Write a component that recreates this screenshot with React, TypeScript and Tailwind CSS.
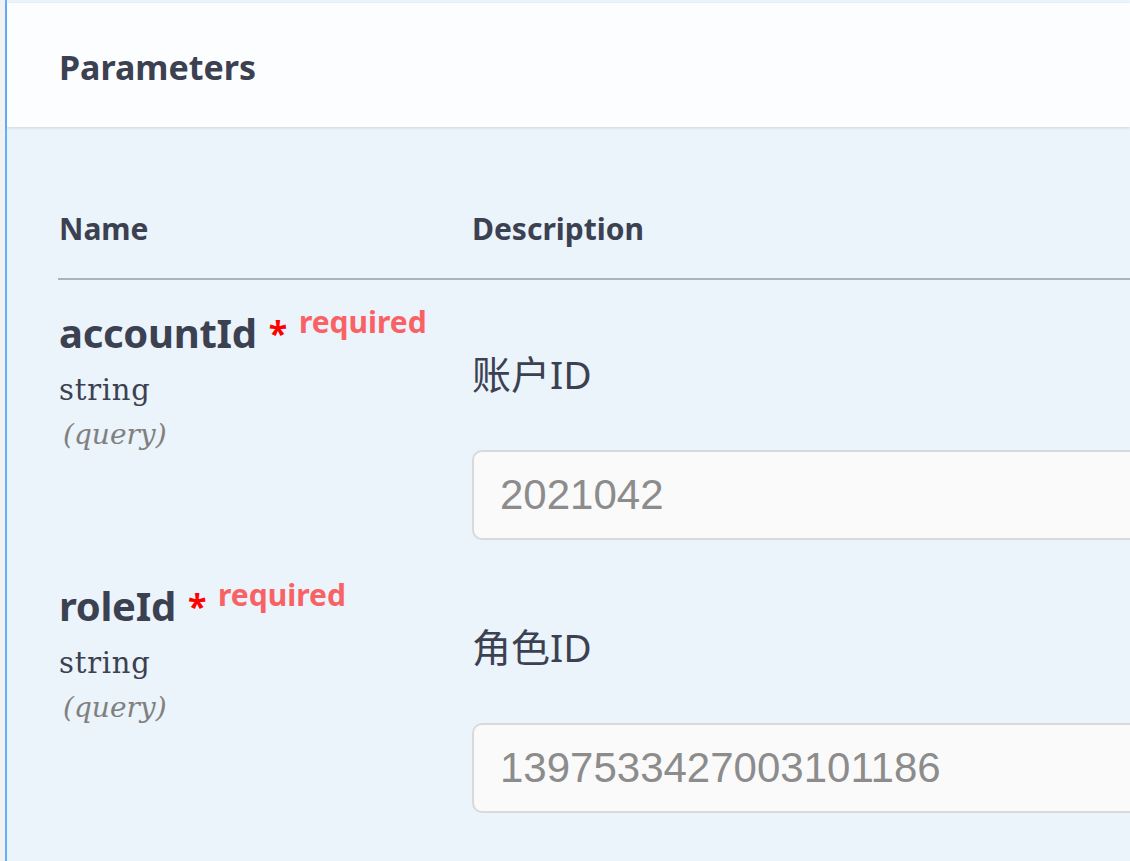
type Param = {
  name: string
  type: string
  location: string
  description: string
  example: string
}

const params: Param[] = [
  {name: 'accountId', type: 'string', location: '(query)', description: '账户ID', example: '2021042'},
  {name: 'roleId', type: 'string', location: '(query)', description: '角色ID', example: '1397533427003101186'},
]

const sans = "font-['Noto_Sans','Noto_Sans_CJK_SC',sans-serif]"

function ParamRow({param}: {param: Param}) {
  return (
    <div className="flex pb-[13px]">
      {/* name column */}
      <div className="w-[413px] shrink-0 pt-[18px]">
        <div className="text-[40px] leading-[48px] font-bold text-[#3b4151] whitespace-nowrap tracking-[-0.3px]">
          {param.name}
          <span className="ml-[12px] text-[34px] text-[#ff0000] align-[2px]">*</span>
          <span className="ml-[12px] text-[30px] text-[#f96265] align-[15px] tracking-normal">required</span>
        </div>
        <div className="mt-[10px] font-['DejaVu_Serif',serif] text-[29px] leading-[46px] tracking-[0.8px] text-[#3b4151]">
          {param.type}
        </div>
        <div className="-mt-[1px] font-['DejaVu_Serif',serif] italic text-[28px] leading-[46px] text-[#808080] pl-[4px]">
          {param.location}
        </div>
      </div>
      {/* description column */}
      <div className="flex-1 pt-[69px]">
        <div className="text-[39px] leading-[50px] text-[#3b4151]">{param.description}</div>
        <input
          readOnly
          placeholder={param.example}
          className="mt-[51px] w-[720px] h-[90px] rounded-[10px] border-2 border-[#d9d9d9] bg-[#fafafa] pl-[26px] font-['Liberation_Sans',sans-serif] text-[42px] text-[#3b4151] placeholder:text-[#8c8c8c] outline-none"
        />
      </div>
    </div>
  )
}

export default function App() {
  return (
    <div className={`w-[1130px] h-screen overflow-hidden bg-[#f2f2f2] pl-[5px] ${sans}`}>
      <div className="h-full border-l-2 border-[#61affe] bg-[#ebf3fb] pt-[3px]">
        {/* section header */}
        <div className="h-[124px] flex items-center pl-[52px] bg-[#fcfdff] shadow-[0_1px_3px_rgba(0,0,0,0.12)]">
          <h4 className="text-[34px] leading-[48px] pt-[3px] font-bold text-[#3b4151]">Parameters</h4>
        </div>

        <div className="pl-[51px]">
          {/* table header */}
          <div className="flex pt-[82px] pb-[29px] border-b-2 border-[#aab2c0] text-[30px] leading-[40px] font-bold text-[#3b4151]">
            <div className="w-[414px] pl-[1px]">Name</div>
            <div>Description</div>
          </div>

          <div className="pl-[1px]">
            {params.map((p) => (
              <ParamRow key={p.name} param={p} />
            ))}
          </div>
        </div>
      </div>
    </div>
  )
}
